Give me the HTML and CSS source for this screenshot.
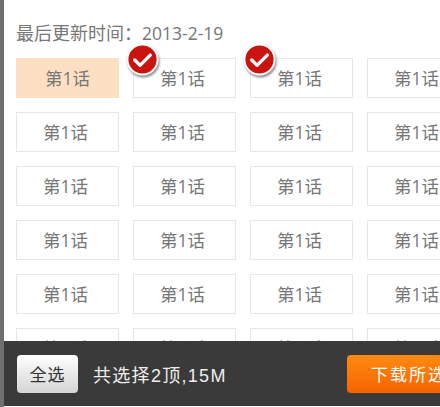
FILE: index.html
```html
<!DOCTYPE html>
<html lang="zh-CN">
<head>
    <meta charset="UTF-8">
    <meta name="viewport" content="width=device-width, initial-scale=1.0">
    <title>选择下载</title>
    <link rel="stylesheet" href="styles.css">
</head>
<body>

<div class="content">
    <div class="update-time"><span class="update-label">最后更新时间：</span>2013-2-19</div>
    <div class="episodes">
        <div class="episode current">第1话</div>
        <div class="episode">第1话<svg class="check" viewBox="0 0 36 36"><circle cx="18" cy="18" r="15.5" fill="#c9140f" stroke="#fff" stroke-width="2"/><path d="M10 18.5l5.5 5.5 10.5-10.5" fill="none" stroke="#fff" stroke-width="3.4" stroke-linecap="round" stroke-linejoin="round"/></svg></div>
        <div class="episode">第1话<svg class="check" viewBox="0 0 36 36"><circle cx="18" cy="18" r="15.5" fill="#c9140f" stroke="#fff" stroke-width="2"/><path d="M10 18.5l5.5 5.5 10.5-10.5" fill="none" stroke="#fff" stroke-width="3.4" stroke-linecap="round" stroke-linejoin="round"/></svg></div>
        <div class="episode">第1话</div>

        <div class="episode">第1话</div>
        <div class="episode">第1话</div>
        <div class="episode">第1话</div>
        <div class="episode">第1话</div>

        <div class="episode">第1话</div>
        <div class="episode">第1话</div>
        <div class="episode">第1话</div>
        <div class="episode">第1话</div>

        <div class="episode">第1话</div>
        <div class="episode">第1话</div>
        <div class="episode">第1话</div>
        <div class="episode">第1话</div>

        <div class="episode">第1话</div>
        <div class="episode">第1话</div>
        <div class="episode">第1话</div>
        <div class="episode">第1话</div>

        <div class="episode">第1话</div>
        <div class="episode">第1话</div>
        <div class="episode">第1话</div>
        <div class="episode">第1话</div>
    </div>
</div>

<div class="bottom-bar">
    <button class="select-all">全选</button>
    <span class="summary">共选择2顶,15M</span>
    <button class="download">下载所选</button>
</div>

</body>
</html>
```

FILE: styles.css
```css
body {
    margin: 0;
    display: flex;
    flex-direction: column;
    height: 407px;
    overflow: hidden;
    box-sizing: border-box;
    border-left: 4px solid #707070;
    background-color: #fff;
    font-family: "Open Sans", "Noto Sans CJK SC", sans-serif;
}

.content {
    flex: 1;
    min-height: 0;
    overflow: hidden;
    padding: 21px 0 0 12px;
}

.update-time {
    height: 23px;
    line-height: 23px;
    margin-bottom: 14px;
    font-size: 17.5px;
    color: #777;
    white-space: nowrap;
}

.update-label {
    font-family: "Noto Sans CJK TC", sans-serif;
    font-size: 18px;
}

.episodes {
    display: grid;
    grid-template-columns: repeat(4, 103px);
    grid-auto-rows: 40px;
    gap: 14px;
}

.episode {
    position: relative;
    display: flex;
    align-items: center;
    justify-content: center;
    box-sizing: border-box;
    padding: 0 4px 2px 0;
    border: 1px solid #e6e6e6;
    font-size: 17.5px;
    color: #777;
}

.episode.current {
    padding-right: 0;
    background-color: #fde0c4;
    border-color: #fde0c4;
}

.check {
    position: absolute;
    left: -9px;
    top: -17px;
    width: 35px;
    height: 35px;
    filter: drop-shadow(1px 2px 1px rgba(0, 0, 0, 0.45));
}

.bottom-bar {
    display: flex;
    align-items: center;
    flex: none;
    height: 65px;
    margin-bottom: 1px;
    padding: 0 0 0 13px;
    background-color: #3a3a3a;
    font-family: "Liberation Sans", "Noto Sans CJK SC", sans-serif;
    white-space: nowrap;
}

.select-all {
    flex: none;
    width: 61px;
    height: 38px;
    padding: 0;
    border: none;
    border-radius: 4px;
    background: linear-gradient(#fff, #d4d4d4);
    font-family: inherit;
    font-size: 17px;
    letter-spacing: 1px;
    color: #333;
}

.summary {
    margin-left: 15px;
    font-size: 18px;
    letter-spacing: 1.3px;
    color: #eee;
}

.download {
    flex: none;
    width: 120px;
    height: 38px;
    margin-left: auto;
    margin-right: -27px;
    padding: 0 0 0 24px;
    border: none;
    border-radius: 4px;
    background: linear-gradient(#ff8a10, #f56400);
    font-family: inherit;
    font-size: 17px;
    letter-spacing: 2px;
    text-align: left;
    color: #fff;
}
```
